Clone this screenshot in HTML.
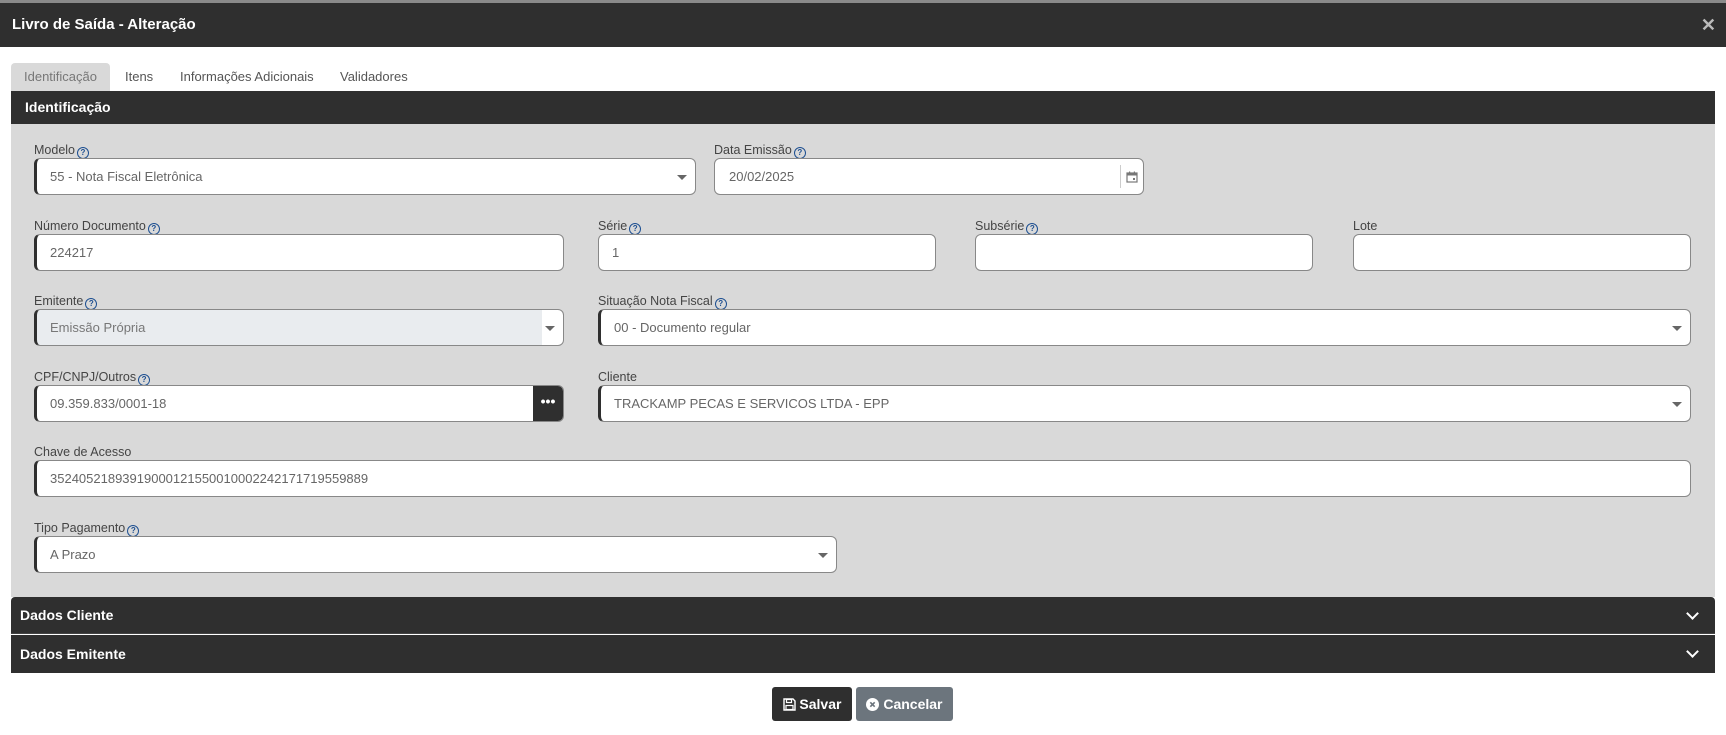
<!DOCTYPE html>
<html><head><meta charset="utf-8"><style>
*{box-sizing:border-box;margin:0;padding:0}
body{width:1726px;height:735px;background:#fff;font-family:"Liberation Sans",sans-serif;position:relative;overflow:hidden}
.abs{position:absolute}
.top{left:0;top:0;width:1726px;height:4px;background:#8a8a8a}
.title{left:0;top:3px;width:1726px;height:44px;background:#2f2f2f;color:#fff;font-weight:bold;font-size:15px;line-height:44px;padding-left:12px}
.close{right:10px;top:3px;color:#bbb;font-size:18px;line-height:44px;font-weight:bold}
.tab{top:63px;height:28px;font-size:13px;color:#555;line-height:28px}
.hdr{left:11px;width:1704px;background:#2f2f2f;color:#fff;font-weight:bold;font-size:14px;padding-left:14px}
.panel{left:11px;top:124px;width:1704px;height:473px;background:#d9d9d9}
.lbl{font-size:12.5px;color:#444}
.q{display:inline-block;width:12px;height:12px;border:1.3px solid #1d4f91;border-radius:50%;font-size:8px;line-height:10px;text-align:center;color:#1d4f91;font-weight:bold;vertical-align:-1px;margin-left:2px}
.in{background:#fff;border:1px solid #888;border-left:3px solid #2f2f2f;border-radius:6px;font-size:13px;color:#666;padding-left:13px;line-height:35px;height:37px}
.arr{position:absolute;right:8px;top:16px;width:0;height:0;border-left:5px solid transparent;border-right:5px solid transparent;border-top:5px solid #666}
.chev{position:absolute;right:18px;top:12px;width:9px;height:9px;border-right:2.5px solid #fff;border-bottom:2.5px solid #fff;transform:rotate(45deg)}
.btn{top:687px;height:34px;border-radius:3px;color:#fff;font-weight:bold;font-size:14px;line-height:34px;text-align:center}
</style></head><body>
<div class="abs top"></div>
<div class="abs title">Livro de Saída - Alteração</div>
<div class="abs close">✕</div>
<div class="abs tab" style="left:11px;width:99px;background:#d9d9d9;border-radius:4px 4px 0 0;text-align:center;color:#777">Identificação</div>
<div class="abs tab" style="left:125px">Itens</div>
<div class="abs tab" style="left:180px">Informações Adicionais</div>
<div class="abs tab" style="left:340px">Validadores</div>
<div class="abs hdr" style="top:91px;height:33px;line-height:33px">Identificação</div>
<div class="abs panel"></div>

<div class="abs lbl" style="left:34px;top:143px">Modelo<span class="q">?</span></div>
<div class="abs in" style="left:34px;top:158px;width:662px">55 - Nota Fiscal Eletrônica<span class="arr"></span></div>
<div class="abs lbl" style="left:714px;top:143px">Data Emissão<span class="q">?</span></div>
<div class="abs in" style="left:714px;top:158px;width:430px;border-left:1px solid #888;padding-left:14px">20/02/2025
<span style="position:absolute;right:22px;top:6px;height:23px;border-left:1px solid #ccc"></span>
<svg style="position:absolute;right:5px;top:12px" width="12" height="12" viewBox="0 0 12 12"><rect x="1" y="2" width="10" height="9" fill="none" stroke="#777" stroke-width="1.2"/><rect x="1" y="2" width="10" height="2.5" fill="#777"/><rect x="3" y="0.5" width="1.2" height="2.5" fill="#777"/><rect x="7.8" y="0.5" width="1.2" height="2.5" fill="#777"/><rect x="7" y="7" width="2" height="2" fill="#777"/></svg></div>

<div class="abs lbl" style="left:34px;top:219px">Número Documento<span class="q">?</span></div>
<div class="abs in" style="left:34px;top:234px;width:530px">224217</div>
<div class="abs lbl" style="left:598px;top:219px">Série<span class="q">?</span></div>
<div class="abs in" style="left:598px;top:234px;width:338px;border-left:1px solid #888">1</div>
<div class="abs lbl" style="left:975px;top:219px">Subsérie<span class="q">?</span></div>
<div class="abs in" style="left:975px;top:234px;width:338px;border-left:1px solid #888"></div>
<div class="abs lbl" style="left:1353px;top:219px">Lote</div>
<div class="abs in" style="left:1353px;top:234px;width:338px;border-left:1px solid #888"></div>

<div class="abs lbl" style="left:34px;top:294px">Emitente<span class="q">?</span></div>
<div class="abs in" style="left:34px;top:309px;width:530px;background:linear-gradient(to right,#e9ecef 0,#e9ecef 505px,#fff 505px);color:#777">Emissão Própria<span class="arr"></span></div>
<div class="abs lbl" style="left:598px;top:294px">Situação Nota Fiscal<span class="q">?</span></div>
<div class="abs in" style="left:598px;top:309px;width:1093px">00 - Documento regular<span class="arr"></span></div>

<div class="abs lbl" style="left:34px;top:370px">CPF/CNPJ/Outros<span class="q">?</span></div>
<div class="abs in" style="left:34px;top:385px;width:530px;overflow:hidden">09.359.833/0001-18<span style="position:absolute;right:0;top:0;width:30px;height:37px;background:#2f2f2f;color:#fff;text-align:center;line-height:30px;font-weight:bold;font-size:14px">•••</span></div>
<div class="abs lbl" style="left:598px;top:370px">Cliente</div>
<div class="abs in" style="left:598px;top:385px;width:1093px">TRACKAMP PECAS E SERVICOS LTDA - EPP<span class="arr"></span></div>

<div class="abs lbl" style="left:34px;top:445px">Chave de Acesso</div>
<div class="abs in" style="left:34px;top:460px;width:1657px">35240521893919000121550010002242171719559889</div>

<div class="abs lbl" style="left:34px;top:521px">Tipo Pagamento<span class="q">?</span></div>
<div class="abs in" style="left:34px;top:536px;width:803px">A Prazo<span class="arr"></span></div>

<div class="abs hdr" style="top:597px;height:37px;line-height:37px;padding-left:9px;border-radius:4px 4px 0 0;border-bottom:1px solid #444">Dados Cliente<span class="chev"></span></div>
<div class="abs hdr" style="top:635px;height:38px;line-height:38px;padding-left:9px">Dados Emitente<span class="chev"></span></div>

<div class="abs btn" style="left:772px;width:80px;background:#2f2f2f">
<svg width="13" height="13" viewBox="0 0 13 13" style="vertical-align:-2px"><path d="M1 1h9l2 2v9H1z" fill="none" stroke="#fff" stroke-width="1.4"/><rect x="3.5" y="1.5" width="5" height="3" fill="none" stroke="#fff" stroke-width="1.2"/><rect x="3" y="7.5" width="7" height="4" fill="none" stroke="#fff" stroke-width="1.2"/></svg> Salvar</div>
<div class="abs btn" style="left:856px;width:97px;background:#6c757d">
<svg width="13" height="13" viewBox="0 0 13 13" style="vertical-align:-2px"><circle cx="6.5" cy="6.5" r="6.5" fill="#fff"/><path d="M4.3 4.3l4.4 4.4M8.7 4.3l-4.4 4.4" stroke="#6c757d" stroke-width="1.6"/></svg> Cancelar</div>
</body></html>
